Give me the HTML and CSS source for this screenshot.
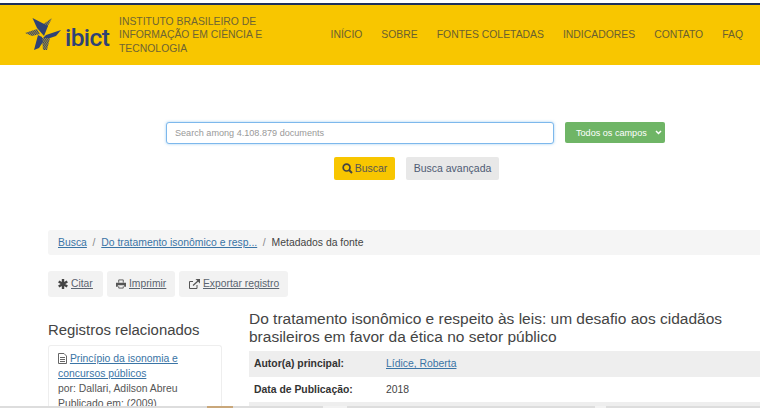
FILE: index.html
```html
<!DOCTYPE html>
<html lang="pt">
<head>
<meta charset="utf-8">
<title>Metadados da fonte</title>
<link rel="stylesheet" href="styles.css">
</head>
<body>
<header class="header">
  <div class="brand">
    <svg class="logo" width="38" height="33" viewBox="25 20 38 33">
      <defs>
        <pattern id="hatch" width="1.6" height="1.6" patternUnits="userSpaceOnUse" patternTransform="rotate(35)">
          <rect width="1.100" height="1.600" fill="#2f4275"/>
        </pattern>
      </defs>
      <path fill="#2f4275" d="M32.500 20L48 28l-4 10-7-8z"/>
      <path fill="#2f4275" d="M61 32L46 37l-3 3h7l6-2z"/>
      <path fill="#2f4275" d="M34 52l4-15 4 2 1 5-4 6z"/>
      <path fill="url(#hatch)" d="M52 20L42 27l5 2 2-3z"/>
      <path fill="url(#hatch)" d="M25 35l12-4 3 5-8 2z"/>
      <path fill="url(#hatch)" d="M43 52l-1-12h8l-3 12z"/>
    </svg>
    <span class="wordmark">ibict</span>
    <span class="institute">INSTITUTO BRASILEIRO DE INFORMAÇÃO EM CIÊNCIA E TECNOLOGIA</span>
  </div>
  <nav class="nav">
    <span>INÍCIO</span><span>SOBRE</span><span>FONTES COLETADAS</span><span>INDICADORES</span><span>CONTATO</span><span>FAQ</span>
  </nav>
</header>

<section class="search">
  <div class="search-row">
    <input class="search-input" type="text" placeholder="Search among 4.108.879 documents">
    <div class="select">Todos os campos
      <svg width="7" height="5" viewBox="0 0 7 5"><path d="M1 1l2.500 2.500L6 1" fill="none" stroke="#fff" stroke-width="1.500"/></svg>
    </div>
  </div>
  <div class="search-actions">
    <button class="btn btn-primary">
      <svg width="11" height="11" viewBox="0 0 11 11"><circle cx="4.600" cy="4.600" r="3.400" fill="none" stroke="#444" stroke-width="1.700"/><path d="M7 7l3 3" stroke="#444" stroke-width="2"/></svg>
      Buscar</button>
    <button class="btn btn-advanced">Busca avançada</button>
  </div>
</section>

<nav class="breadcrumb">
  <a href="#">Busca</a><span class="sep">/</span><a href="#">Do tratamento isonômico e resp...</a><span class="sep">/</span><span>Metadados da fonte</span>
</nav>

<div class="tools">
  <a class="tool" href="#"><svg width="10" height="10" viewBox="0 0 10 10"><path d="M5 0v10M.7 2.500l8.600 5M.7 7.500l8.600-5" stroke="#444" stroke-width="2.400"/></svg><span>Citar</span></a>
  <a class="tool tool-print" href="#"><svg width="10" height="10" viewBox="0 0 11 10"><path fill="none" stroke="#555" d="M3 3.500V.5h5v3M3 7.500v2h5v-2"/><path fill="#555" d="M0 3.500h11V8H9V6.500H2V8H0z"/></svg><span>Imprimir</span></a>
  <a class="tool tool-export" href="#"><svg width="11" height="10" viewBox="0 0 11 10"><path d="M8 6v3.500H.5V2.500H4" fill="none" stroke="#555"/><path d="M4 6.500L9 2" stroke="#555" stroke-width="1.200"/><path fill="#555" d="M6.500 0H11v4.500z"/></svg><span>Exportar registro</span></a>
</div>

<main class="content">
  <aside class="sidebar">
    <h2>Registros relacionados</h2>
    <div class="related">
      <svg class="doc" width="9" height="11" viewBox="0 0 9 11"><path d="M.5.500h5.500l2.500 2.500v7.500h-8z" fill="none" stroke="#666"/><path d="M2 4.500h5M2 6.500h5M2 8.500h5" stroke="#666"/></svg>
      <a href="#">Princípio da isonomia e concursos públicos</a><br>
      por: Dallari, Adilson Abreu<br>
      Publicado em: (2009)
    </div>
  </aside>
  <article class="record">
    <h1>Do tratamento isonômico e respeito às leis: um desafio aos cidadãos brasileiros em favor da ética no setor público</h1>
    <dl class="meta">
      <div class="meta-row shaded"><dt>Autor(a) principal:</dt><dd><a href="#">Lídice, Roberta</a></dd></div>
      <div class="meta-row"><dt>Data de Publicação:</dt><dd>2018</dd></div>
      <div class="meta-end shaded"></div>
    </dl>
  </article>
</main>

<div class="edge">
  <span class="edge-a"></span><span class="edge-b"></span><span class="edge-c"></span><span class="edge-gap"></span><span class="edge-d"></span><span class="edge-gap2"></span><span class="edge-e"></span>
</div>
</body>
</html>
```
FILE: styles.css
```css
* { box-sizing: border-box; }
html, body { margin: 0; padding: 0; height: 408px; overflow: hidden; }
body { width: 760px; background: #fff; color: #333; font-family: "Liberation Sans", Arial, sans-serif; font-size: 12px; position: relative; }
a { color: #3a74a5; }

.header { height: 62px; margin-top: 3px; background: #f8c600; border-top: 2px solid #1e2f5c; display: flex; align-items: center; justify-content: space-between; padding: 0 17px 0 25px; }
.brand { display: flex; align-items: center; }
.logo { flex: none; margin-top: -1px; }
.wordmark { font-family: Roboto, "Liberation Sans", sans-serif; font-size: 24.500px; font-weight: 500; color: #2f4275; letter-spacing: -.6px; margin-left: 2px; width: 54px; margin-top: 5px; }
.institute { width: 158px; font-size: 10.400px; line-height: 13.300px; color: #6e6434; }
.nav { display: flex; gap: 19px; font-size: 10.400px; color: #6a5f30; margin-top: -2px; }

.search { height: 165px; padding-top: 57px; }
.search-row { display: flex; padding-left: 166px; gap: 11px; }
.search-input { width: 388px; height: 22px; border: 1px solid #7db8ec; border-radius: 3px; padding: 0 8px; font: 9.100px "Liberation Sans", Arial, sans-serif; box-shadow: 0 0 3px rgba(102,175,233,.6); outline: none; }
.search-input::placeholder { color: #999; opacity: 1; }
.select { width: 100px; height: 21px; background: #6fb566; color: #fff; border-radius: 2px; font-size: 9.100px; display: flex; align-items: center; justify-content: space-between; padding: 0 3px 0 11px; }
.search-actions { display: flex; gap: 11px; margin-top: 13px; padding-left: 334px; }
.btn { height: 23px; border: 0; border-radius: 2px; font: 10.500px "Liberation Sans", Arial, sans-serif; display: flex; align-items: center; justify-content: center; padding: 0 0 1px; }
.btn-primary { width: 61px; background: #f8c600; color: #555; gap: 2px; }
.btn-advanced { width: 93px; background: #e8e8e8; color: #4e5a73; }

.breadcrumb { margin-left: 48px; height: 25px; background: #f5f5f5; border-radius: 3px 0 0 3px; display: flex; align-items: center; padding: 0 0 1px 10px; font-size: 10.400px; color: #444; }
.sep { color: #888; margin: 0 6px 0 5.500px; }

.tools { display: flex; gap: 4px; margin: 16px 0 0 48px; }
.tool { height: 26px; background: #f2f2f2; border-radius: 3px; display: flex; align-items: center; gap: 3px; padding: 0 10px 1px; font-size: 10.300px; color: #5a6470; width: 55px; white-space: nowrap; }
.tool svg { flex: none; }
.tool span { text-decoration: underline; }
.tool-print { width: 68px; padding-left: 9px; }
.tool-export { width: 109px; }

.content { display: flex; height: 98px; overflow: hidden; margin: 13px 0 0 48px; }
.sidebar { width: 174px; margin-right: 27px; flex: none; }
.sidebar h2 { margin: 11px 0 6px; font-size: 14.900px; font-weight: 400; color: #444; line-height: 18px; }
.related { height: 63px; overflow: hidden; border: 1px solid #eee; border-bottom: 0; border-radius: 3px 3px 0 0; padding: 5px 9px 0; font-size: 10.400px; line-height: 15px; color: #555; }
.doc { vertical-align: -2px; }
.record { flex: 1; min-width: 0; }
.record h1 { margin: 0 0 5px; font-size: 15.500px; font-weight: 400; line-height: 18px; color: #444; }
.meta { margin: 0; }
.meta-row { display: flex; height: 25.500px; align-items: center; padding-left: 5px; font-size: 10.400px; }
.meta-end { height: 6px; }
.shaded { background: #eee; }
.meta-row dt { width: 132px; font-weight: 700; color: #333; }
.meta-row dd { margin: 0; color: #444; }

.edge { position: absolute; left: 0; right: 0; bottom: 0; height: 2px; display: flex; }
.edge span { display: block; }
.edge-a { width: 207px; background: #ddd; }
.edge-b { width: 26px; background: #c9a77a; }
.edge-c { width: 90px; background: #ddd; }
.edge-gap { width: 24px; background: #f2f2f2; }
.edge-d { width: 248px; background: #ddd; }
.edge-gap2 { width: 11px; background: #f2f2f2; }
.edge-e { flex: 1; background: #ddd; }
```
